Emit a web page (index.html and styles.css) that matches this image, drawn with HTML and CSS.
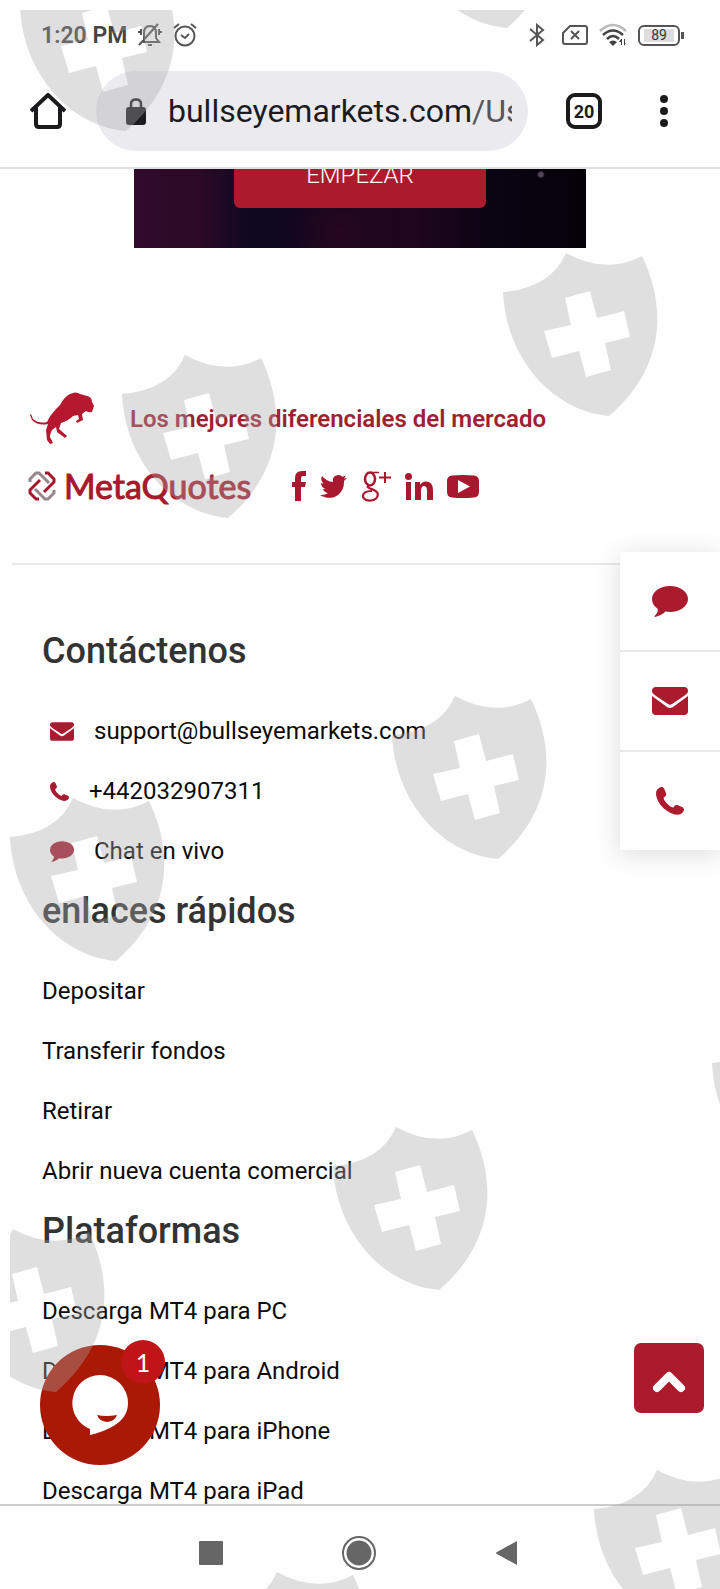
FILE: index.html
```html
<!DOCTYPE html>
<html lang="es">
<head>
<meta charset="utf-8">
<meta name="viewport" content="width=device-width, initial-scale=1">
<title>Bullseye Markets</title>
<link rel="stylesheet" href="styles.css">
</head>
<body>
<svg class="defs" aria-hidden="true">
  <symbol id="mail" viewBox="0 0 36 28"><path d="M4 0H32Q36 0 36 4V5Q35 7 32 9L20 17Q18 18.500 16 17L4 9Q1 7 0 5V4Q0 0 4 0ZM0 9L15 20Q18 22 21 20L36 9V24Q36 28 32 28H4Q0 28 0 24Z"/></symbol>
  <symbol id="phone" viewBox="0 0 28 28"><path d="M3 1C5-.4 7-.2 8 1.500L10 6C10.500 8 9.800 9 8 10.300C7.200 11.200 8 13 10.500 16C13.500 19 16 21 17.500 20.200C18.700 18.500 20 17.700 22 18.300L26.500 20.300C28.200 21.500 28.300 23 27.300 24.800C25 28.300 20.500 28.600 16 26.500C8.500 23.500 2 16.500.4 9.500C-.5 5.500.3 2.500 3 1Z"/></symbol>
  <symbol id="comment" viewBox="0 0 36 31"><path d="M18 0C28 0 36 5.700 36 13S28 26 18 26C16.400 26 15 25.800 13.500 25.600C10 29 6 30.600 3 30.900C2.300 30.900 2.300 30.200 2.800 29.700C5.300 27 6 26 5.800 23C2 20.300 0 17 0 13C0 5.700 8 0 18 0Z"/></symbol>
  <symbol id="shield" viewBox="0 0 160 164" overflow="visible"><path fill-rule="evenodd" d="M1 39Q49 35 64 0Q104 22 140 3C165 55 163 115 107 163C50 158 4 105 1 39ZM63 45L69 72L42 78L50 105L77 98L84 124L109 117L103 90L128 84L122 58L95 65L88 38Z"/></symbol>
</svg>

<header class="status">
  <span class="time">1:20 PM</span>
  <svg class="line" width="24" height="24" viewBox="0 0 24 24"><path d="M6 18V10Q6 3 12 3T18 10V15L21 19H5M10 22H14M1 22L20 1M3 6V12M1 8V10M21 6V12M23 8V10"/></svg>
  <svg class="line" width="24" height="24" viewBox="0 0 24 24"><circle cx="12" cy="13" r="9.500"/><path d="M8 12L12 15L16 11M1 5L6 1M18 1L23 5"/></svg>
  <span class="grow"></span>
  <svg class="line" width="16" height="24" viewBox="0 0 16 24"><path d="M1 6L14 17L8 22V2L14 7L1 18"/></svg>
  <svg class="line sim" width="26" height="20" viewBox="0 0 26 20"><path d="M8 1H23Q25 1 25 3V17Q25 19 23 19H3Q1 19 1 17V8ZM9 6L17 14M17 6L9 14"/></svg>
  <svg class="wifi" width="28" height="24" viewBox="0 0 28 24"><g fill="none" stroke-width="2.500"><path stroke="#bbb" d="M1 8Q14-4 27 8"/><path stroke="#444" d="M4 12Q14 3 24 12M8 16Q14 10 20 16"/></g><path fill="#444" d="M10 19Q14 16 18 19L14 23ZM22 16L20 19H22V22H23V16ZM25 16V23L27 20H26V16Z"/></svg>
  <span class="battery"><span>89</span></span>
</header>

<nav class="browser">
  <button class="plain" aria-label="Inicio"><svg width="36" height="36" viewBox="0 0 36 36" fill="none" stroke="#1b1b1d" stroke-width="4"><path d="M1 18L18 2L35 18M6 14V31Q6 34 9 34H27Q30 34 30 31V14"/></svg></button>
  <div class="address">
    <svg width="20" height="27" viewBox="0 0 20 27"><path d="M5 10V6Q5 1.500 10 1.500T15 6V10" fill="none" stroke="#1c1c1f" stroke-width="2.500"/><rect y="9" width="20" height="18" rx="3" fill="#1c1c1f"/></svg>
    <div class="url">bullseyemarkets.com<span>/Us</span></div>
  </div>
  <button class="tabs" aria-label="Pestañas">20</button>
  <button class="plain" aria-label="Menú"><svg width="8" height="32" viewBox="0 0 8 32" fill="#1b1b1d"><circle cx="4" cy="4" r="4"/><circle cx="4" cy="16" r="4"/><circle cx="4" cy="28" r="4"/></svg></button>
</nav>

<main class="page">
  <section class="hero"><button class="start">EMPEZAR</button></section>

  <section class="brand">
    <div class="row">
      <svg class="bull" width="66" height="54" viewBox="0 0 66 54"><path fill="#b5182f" d="M1 22L3 27Q9 32 17 30C20 23 25 18 30 13Q34 5 40 2Q46-1 50 2L57 4Q62 5 62 10L64 14L62 20Q59 21 56 19L52 22L53 28L47 31L46 29L49 27L48 23L43 24Q38 29 31 31L29 37L37 44L35 46L27 40L26 35L22 38Q20 42 20 45L23 51L20 52L17 48L16 38L18 32Q8 34 2 28L0 23Z"/></svg>
      <strong class="tagline">Los mejores diferenciales del mercado</strong>
    </div>
    <div class="row marks">
      <svg width="28" height="30" viewBox="0 0 28 30" fill="none" stroke-width="3"><path stroke="#96888c" d="M2 11V8L8 2H11L21 12M26 19V22L20 28H17L7 18"/><path stroke="#a5182b" d="M17 2H20L26 8V11L16 21M11 28H8L2 22V19L12 9"/></svg>
      <span class="meta">MetaQuotes</span>
      <div class="social">
        <a href="#" aria-label="Facebook"><svg width="14" height="30" viewBox="0 0 14 30"><path d="M14 0V5H11Q9 5 9 8V11H14L13 16H9V30H3V16H0V11H3V7Q3 0 10 0Z"/></svg></a>
        <a href="#" aria-label="Twitter"><svg width="27" height="23" viewBox="0 0 27 23"><path d="M27 3L24 6Q24.500 15 18 20C12 24.500 5 23 0 20Q5 20.500 8 18Q4 17.500 3 14H5.500Q1 12 1 8L3.500 8.800Q0 5.500 2 1Q6.500 6.500 13 7Q12 1.500 17 .2Q20-.6 22.500 1.800L26 .5L24 3.500Z"/></svg></a>
        <a href="#" aria-label="Google Plus"><svg width="30" height="31" viewBox="0 0 30 31" fill="none" stroke="#a8182e"><ellipse cx="9" cy="8" rx="5" ry="6.500" stroke-width="2.500"/><path stroke-width="1.500" d="M18 1.500H10"/><path stroke-width="2.200" d="M8 14C3 18 14 17 16.500 22C19 31 2 32 2 25Q2 20 11 20"/><path stroke-width="2" d="M24 1V12M18 6.500H30"/></svg></a>
        <a href="#" aria-label="LinkedIn"><svg width="28" height="27" viewBox="0 0 28 27"><circle cx="3.500" cy="3.500" r="3.500"/><path d="M1 9H6V27H1ZM10 9H15V12Q17 8.500 21 8.500Q28 8.500 28 17V27H22V18Q22 13 19 13Q16 13 16 18V27H10Z"/></svg></a>
        <a href="#" aria-label="YouTube"><svg width="32" height="23" viewBox="0 0 32 23"><path fill-rule="evenodd" d="M5 .5Q16-.5 27 .5Q32 1 32 6V17Q32 22 27 22.500Q16 23.500 5 22.500Q0 22 0 17V6Q0 1 5 .5ZM11 5V18L23 11.500Z"/></svg></a>
      </div>
    </div>
  </section>

  <section class="links">
    <h2>Contáctenos</h2>
    <ul class="contact">
      <li><a href="#"><svg width="24" height="19"><use href="#mail"/></svg>support@bullseyemarkets.com</a></li>
      <li><a href="#"><svg width="19" height="19"><use href="#phone"/></svg>+442032907311</a></li>
      <li><a href="#"><svg width="24" height="21"><use href="#comment"/></svg>Chat en vivo</a></li>
    </ul>
    <h2>enlaces rápidos</h2>
    <ul>
      <li><a href="#">Depositar</a></li>
      <li><a href="#">Transferir fondos</a></li>
      <li><a href="#">Retirar</a></li>
      <li><a href="#">Abrir nueva cuenta comercial</a></li>
    </ul>
    <h2>Plataformas</h2>
    <ul>
      <li><a href="#">Descarga MT4 para PC</a></li>
      <li><a href="#">Descarga MT4 para Android</a></li>
      <li><a href="#">Descarga MT4 para iPhone</a></li>
      <li><a href="#">Descarga MT4 para iPad</a></li>
    </ul>
  </section>

  <aside class="side">
    <button aria-label="Chat"><svg width="36" height="31"><use href="#comment"/></svg></button>
    <button aria-label="Correo"><svg width="36" height="28"><use href="#mail"/></svg></button>
    <button aria-label="Teléfono"><svg width="28" height="28"><use href="#phone"/></svg></button>
  </aside>
  <button class="chat" aria-label="Abrir chat">
    <svg width="58" height="62" viewBox="0 0 58 62"><path fill="#fff" d="M29 1A28 28 0 0 1 57 29C57 43 47 54 19 61V55A28 28 0 0 1 29 1Z"/><path fill="#a91905" d="M26 41Q35 43 46 41Q44 47 36 48Q28 47 26 41Z"/></svg>
    <span class="badge">1</span>
  </button>
  <button class="top" aria-label="Subir"><svg width="34" height="24" viewBox="0 0 34 24" fill="none" stroke="#fff" stroke-width="8" stroke-linecap="round" stroke-linejoin="round"><path d="M5 18L17 6L29 18"/></svg></button>
</main>

<footer class="system">
  <button class="plain" aria-label="Recientes"><svg width="24" height="24"><rect width="24" height="24" rx="1" fill="#666"/></svg></button>
  <button class="plain" aria-label="Pantalla de inicio"><svg width="36" height="36"><circle cx="18" cy="18" r="16" fill="none" stroke="#666" stroke-width="2"/><circle cx="18" cy="18" r="12.500" fill="#666"/></svg></button>
  <button class="plain" aria-label="Atrás"><svg width="24" height="26"><path d="M2 12L22 1V25L2 14Q0 13 2 12Z" fill="#666"/></svg></button>
</footer>

<div class="stamps" aria-hidden="true"><svg width="100%" height="100%">
  <use href="#shield" x="9" y="-42" width="160" height="164"/>
  <use href="#shield" x="390" y="-145" width="160" height="164"/>
  <use href="#shield" x="492" y="243" width="160" height="164"/>
  <use href="#shield" x="111" y="345" width="160" height="164"/>
  <use href="#shield" x="381" y="686" width="160" height="164"/>
  <use href="#shield" x="-1" y="788" width="160" height="164"/>
  <use href="#shield" x="701" y="1014" width="160" height="164"/>
  <use href="#shield" x="322" y="1117" width="160" height="164"/>
  <use href="#shield" x="-61" y="1219" width="160" height="164"/>
  <use href="#shield" x="583" y="1460" width="160" height="164"/>
  <use href="#shield" x="203" y="1562" width="160" height="164"/>
</svg></div>
</body>
</html>
```

FILE: styles.css
```css
* { box-sizing: border-box; }
body {
  margin: 0;
  height: 100vh;
  display: flex;
  flex-direction: column;
  position: relative;
  overflow: hidden;
  background: #fefefe;
  color: #0c0c0c;
  font-family: Roboto, "Liberation Sans", sans-serif;
}
.defs { position: absolute; width: 0; height: 0; }
button { font: inherit; border: 0; padding: 0; }
svg { display: block; flex: none; }
a { color: inherit; text-decoration: none; }
.plain { background: none; display: grid; place-items: center; }
.grow { flex: 1; }

.status {
  flex: none;
  height: 70px;
  padding: 0 36px 0 41px;
  display: flex;
  align-items: center;
  gap: 11px;
}
.time { font-size: 23px; font-weight: 600; color: #444; }
.line { fill: none; stroke: #555; stroke-width: 2; }
.sim { margin-left: 6px; }
.battery {
  position: relative;
  width: 42px;
  height: 21px;
  margin-right: 4px;
  padding: 2px 4px;
  border: 2px solid #555;
  border-radius: 6px;
  font-size: 14px;
  line-height: 13px;
  text-align: center;
}
.battery span { display: block; background: #ddd; color: #333; }
.battery::after {
  content: "";
  position: absolute;
  right: -6px;
  top: 5px;
  width: 3px;
  height: 7px;
  background: #555;
}

.browser {
  flex: none;
  height: 99px;
  padding: 1px 52px 16px 30px;
  display: flex;
  align-items: center;
  border-bottom: 2px solid #e0e0e0;
}
.address {
  flex: 1;
  min-width: 0;
  height: 80px;
  margin: 0 38px 0 30px;
  padding: 0 16px 0 30px;
  border-radius: 40px;
  background: #ebebef;
  display: flex;
  align-items: center;
  gap: 22px;
}
.url {
  flex: 1;
  overflow: hidden;
  white-space: nowrap;
  font-size: 32px;
  line-height: 42px;
  color: #1c1c1f;
}
.url span { color: #55555a; }
.tabs {
  width: 36px;
  height: 36px;
  margin-right: 58px;
  border: 4px solid #1b1b1d;
  border-radius: 9px;
  background: none;
  color: #1b1b1d;
  font-size: 18px;
  font-weight: 700;
}

.page { flex: 1; min-height: 0; position: relative; overflow: hidden; }
.hero {
  height: 79px;
  margin: 0 134px;
  padding-bottom: 40px;
  display: flex;
  align-items: flex-end;
  justify-content: center;
  overflow: hidden;
  background:
    radial-gradient(circle at 90% 7%, #55455a 0 2px, transparent 4px),
    radial-gradient(circle at 46% 80%, #26071f, transparent 22%),
    linear-gradient(90deg, #300b2c, #2c0a27 14%, #0f0820 26%, #12061f 38%, #1f061d 62%, #0c0413 78%, #050109);
}
.start {
  flex: none;
  width: 252px;
  height: 66px;
  border-radius: 6px;
  background: #ac1a2d;
  color: #fff;
  font-size: 24px;
  font-weight: 300;
}

.brand { margin: 0 12px; padding: 144px 16px 51px; border-bottom: 2px solid #e8e8e8; }
.row { display: flex; align-items: center; }
.tagline { margin-left: 34px; font-size: 24px; font-weight: 600; line-height: 54px; color: #a01f32; }
.bull { margin-left: 2px; }
.marks { height: 66px; padding-top: 14px; }
.meta {
  margin-left: 8px;
  font-family: Lato, sans-serif;
  font-size: 34px;
  line-height: 48px;
  color: #a8182b;
  -webkit-text-stroke: 1px #a8182b;
}
.social { display: flex; align-items: center; gap: 14px; margin-left: 41px; fill: #a8182e; }

.links { padding: 56px 42px 0; }
h2 { margin: 0 0 20px; font-size: 36px; font-weight: 500; line-height: 60px; color: #333; }
ul { list-style: none; margin: 0; padding: 0; font-size: 24px; line-height: 60px; }
.contact a { display: flex; align-items: center; gap: 20px; padding-left: 8px; }
.contact svg { fill: #a91b30; }

.side {
  position: absolute;
  right: 0;
  top: 383px;
  width: 100px;
  background: #fefefe;
  box-shadow: 0 4px 24px #0002;
}
.side button {
  width: 100%;
  height: 100px;
  display: grid;
  place-items: center;
  background: none;
  border-bottom: 2px solid #e8e8e8;
}
.side button:last-child { height: 98px; border-bottom: 0; }
.side svg { fill: #ac1a2d; }
.chat {
  position: absolute;
  left: 40px;
  bottom: 39px;
  width: 120px;
  height: 120px;
  border-radius: 50%;
  background: #a91905;
  display: grid;
  place-items: center;
}
.badge {
  position: absolute;
  right: -5px;
  top: -5px;
  width: 44px;
  height: 44px;
  border-radius: 50%;
  background: #c01518;
  color: #fff;
  font-family: Lato, sans-serif;
  font-size: 25px;
  line-height: 44px;
}
.top {
  position: absolute;
  right: 16px;
  bottom: 91px;
  width: 70px;
  height: 70px;
  padding-top: 8px;
  border-radius: 7px;
  background: #ac1a2d;
  display: grid;
  place-items: center;
}

.system {
  flex: none;
  height: 85px;
  padding: 10px 2px 0 0;
  border-top: 2px solid #ccc;
  display: grid;
  grid-template-columns: repeat(3, 148px);
  justify-content: center;
  align-items: center;
}
.stamps { position: absolute; inset: 10px 0 0 10px; pointer-events: none; fill: #aaa; opacity: .36; }
```
